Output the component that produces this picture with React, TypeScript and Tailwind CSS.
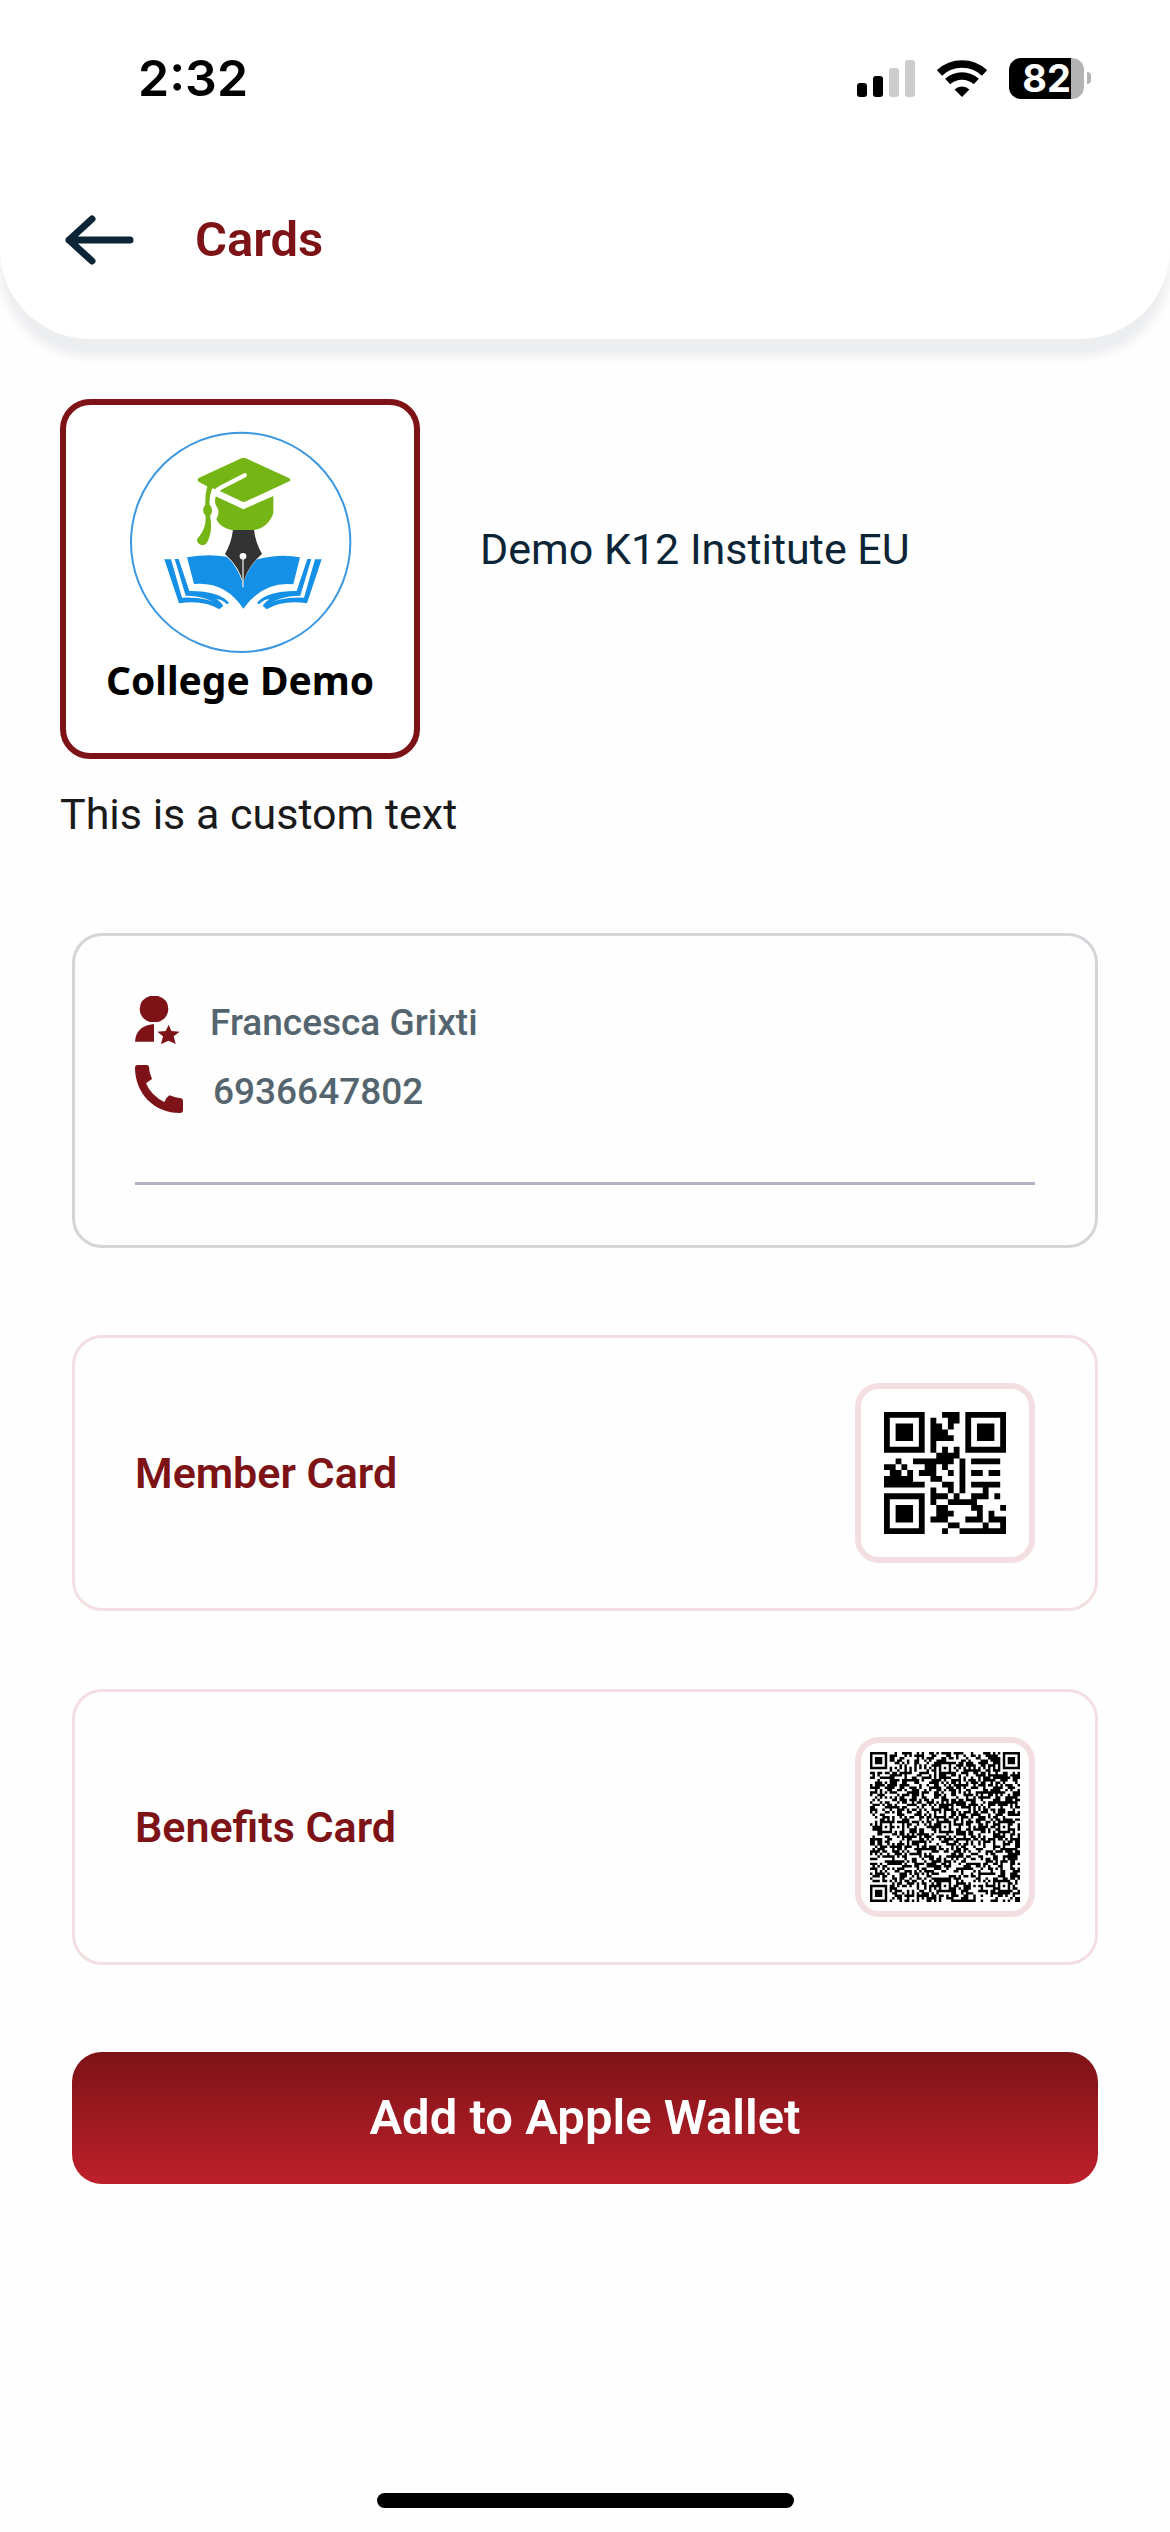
import type { ReactNode } from 'react';

const MEMBER_QR = [
  '#######...###.#######',
  '#.....#.#..##.#.....#',
  '#.###.#.##.#..#.###.#',
  '#.###.#.###...#.###.#',
  '#.###.#.####..#.###.#',
  '#.....#.#.....#.....#',
  '#######.#.#.#.#######',
  '.........####........',
  '..#..#######.#.#####.',
  '##.#...##.#..#.......',
  '.##.#.###..#.#.##.##.',
  '#####...##...#.......',
  '#######...##.#.#####.',
  '........#..#.#...#...',
  '#######.###.#..###.#.',
  '#.....#.#..#####.....',
  '#.###.#..##....##...#',
  '#.###.#..###....#.#..',
  '#.###.#.###...###.###',
  '#.....#....##....#..#',
  '#######...#..########',
];

// Dense 61x61 code: finder, alignment and timing patterns around filler modules.
function buildBenefitsQr() {
  const size = 61;
  let seed = 7919;
  const rows: boolean[][] = [];
  for (let y = 0; y < size; y++) {
    const row: boolean[] = [];
    for (let x = 0; x < size; x++) {
      seed = (seed * 1103515245 + 12345) % 2147483648;
      row.push(seed / 2147483648 < 0.52);
    }
    rows.push(row);
  }

  for (let i = 8; i < size - 8; i++) {
    rows[6][i] = i % 2 === 0;
    rows[i][6] = i % 2 === 0;
  }

  const ring = (cx: number, cy: number, outer: number, light: number[]) => {
    for (let dy = -outer; dy <= outer; dy++) {
      for (let dx = -outer; dx <= outer; dx++) {
        const x = cx + dx;
        const y = cy + dy;
        if (x < 0 || y < 0 || x >= size || y >= size) continue;
        rows[y][x] = !light.includes(Math.max(Math.abs(dx), Math.abs(dy)));
      }
    }
  };

  [[3, 3], [57, 3], [3, 57]].forEach(([x, y]) => ring(x, y, 4, [2, 4]));
  [[30, 6], [6, 30], [30, 30], [54, 30], [30, 54], [54, 54]].forEach(([x, y]) =>
    ring(x, y, 2, [1])
  );

  return rows.map((r) => r.map((on) => (on ? '#' : '.')).join(''));
}

const BENEFITS_QR = buildBenefitsQr();

function QrCode({ rows, className }: { rows: string[]; className: string }) {
  const d = rows
    .map((row, y) =>
      [...row.matchAll(/#+/g)]
        .map((m) => `M${m.index} ${y}h${m[0].length}v1h-${m[0].length}z`)
        .join('')
    )
    .join('');
  return (
    <svg viewBox={`0 0 ${rows.length} ${rows.length}`} className={className} aria-hidden="true">
      <path d={d} fill="#000" />
    </svg>
  );
}

function StatusBar() {
  return (
    <div className="flex h-[156px] items-center justify-between pl-[138px] pr-[79px] font-['Inter',sans-serif]">
      <span className="text-[50px] leading-[60px] font-semibold text-black">2:32</span>
      <div className="flex items-center">
        <svg viewBox="0 0 58 37" className="h-[37px] w-[58px]" aria-hidden="true">
          <rect x="0" y="23" width="10" height="14" rx="3" />
          <rect x="16" y="16" width="10" height="21" rx="3" />
          <rect x="32" y="8" width="10" height="29" rx="3" fill="#ccc" />
          <rect x="48" y="0" width="10" height="37" rx="3" fill="#ccc" />
        </svg>
        <svg viewBox="0 0 50 37" className="ml-[22px] h-[37px] w-[50px]" aria-hidden="true">
          <path d="M2.5 12.9A33 33 0 0 1 47.5 12.9" fill="none" stroke="#000" strokeWidth="7.5" />
          <path d="M10.7 21.6A21 21 0 0 1 39.3 21.6" fill="none" stroke="#000" strokeWidth="7.5" />
          <path d="M25 37L17.6 29.4A11 11 0 0 1 32.4 29.4Z" />
        </svg>
        <div className="ml-[22px] flex h-[41px] w-[75px] items-center justify-center rounded-[12px] bg-[linear-gradient(90deg,#000_83%,#b3b3b3_83%)] text-[38px] leading-[41px] font-bold text-white">
          82
        </div>
        <div className="ml-[3px] h-[12px] w-[4px] rounded-r-full bg-[#b3b3b3]" />
      </div>
    </div>
  );
}

function CollegeLogo() {
  return (
    <svg viewBox="48 45 1044 756" className="h-[252px] w-[348px]" aria-hidden="true">
      <circle cx="572" cy="457" r="329" fill="#fff" stroke="#3b97e0" strokeWidth="6" />
      {/* book */}
      <path
        d="M411 502Q475 490 530 500Q560 525 579 580Q598 528 622 508Q690 490 750 502L730 583Q640 573 580 656Q525 573 432 582Z"
        fill="#1490e6"
      />
      {[undefined, 'translate(1158 0) scale(-1 1)'].map((t, i) => (
        <g key={i} transform={t} fill="#1490e6">
          <path d="M343 508H363L396 623Q475 620 518 649L508 658Q460 629 387 640Z" />
          <path d="M374 507H386L418 603Q505 602 537 638L531 643Q514 627 500 628Q513 636 520 647L514 652Q475 618 407 617Z" />
        </g>
      ))}
      {/* pen nib */}
      <path
        d="M549 418H612Q616 458 636 492Q592 530 580 580Q568 530 525 492Q545 458 549 418Z"
        fill="#333"
      />
      <circle cx="579" cy="499" r="10" fill="#fff" />
      <path d="M579 505V592" stroke="#e5e5e5" strokeWidth="4" />
      {/* cap */}
      <g fill="#76b516">
        <path d="M446 264L574 205Q581 201 588 205L718 265Q725 270 718 274L588 334Q581 338 574 334L511 304L492 296L474 290L446 275Q440 269 446 264Z" />
        <path d="M497 319L580 358L670 318V370C662 395 640 418 612 420H545C520 414 505 402 499 386C507 375 507 362 502 353C494 343 494 334 497 319Z" />
        <path d="M470 288H490Q477 315 479 344Q493 360 480 378C487 410 482 438 472 456Q466 467 454 465Q441 462 441 448C455 430 468 415 467 378Q452 360 466 344Q465 312 472 288Z" />
      </g>
      <path
        d="M584 256L512 293Q488 304 486 336"
        fill="none"
        stroke="#fff"
        strokeWidth="13"
        strokeLinecap="round"
      />
    </svg>
  );
}

function PersonStarIcon() {
  return (
    <svg viewBox="225 231 135 144" className="h-[48px] w-[45px]" fill="#7d1316" aria-hidden="true">
      <path d="M270 231H294Q325 240 325 270Q323 300 294 309H270Q241 300 239 270Q240 240 270 231Z" />
      <path d="M282 315V368H225Q228 320 282 315Z" />
      <path d="M326 317L334 336L359 338L341 352L347 375L326 365L303 375L309 352L292 338L317 336Z" />
    </svg>
  );
}

function PhoneIcon() {
  return (
    <svg viewBox="225 438 144 144" className="h-[48px] w-[48px]" fill="#7d1316" aria-hidden="true">
      <path d="M225 446Q225 438 233 438H260Q266 438 267 444L269 459L276 480L258 493Q274 531 313 549Q316 538 328 529L346 535L363 538Q369 539 369 545V573Q369 582 360 582C282 582 225 522 225 446Z" />
    </svg>
  );
}

function QrCard({ title, children }: { title: string; children: ReactNode }) {
  return (
    <button
      type="button"
      className="flex w-full items-center justify-between rounded-[30px] border-3 border-[#f3dfe1] px-15 py-[45px] text-left"
    >
      <span className="text-[43px] leading-[50px] font-semibold text-[#7d1316]">{title}</span>
      <span className="flex size-[180px] items-center justify-center rounded-[24px] border-6 border-[#f3dfe1] bg-white">
        {children}
      </span>
    </button>
  );
}

export default function App() {
  return (
    <div className="flex min-h-screen flex-col bg-[#fefefe] font-['Roboto',sans-serif]">
      <header className="rounded-b-[90px] bg-white pb-[15px] shadow-[0_18px_9px_#edeef0]">
        <StatusBar />
        <div className="flex h-[168px] items-center gap-15 px-15">
          <button type="button" aria-label="Back">
            <svg viewBox="0 0 75 50" className="h-[50px] w-[75px]" aria-hidden="true">
              <path
                d="M32 4L9 25L32 46M9 25H70"
                fill="none"
                stroke="#0c2536"
                strokeWidth="7"
                strokeLinecap="round"
                strokeLinejoin="round"
              />
            </svg>
          </button>
          <h1 className="text-[49px] leading-[58px] font-semibold text-[#7d1316]">Cards</h1>
        </div>
      </header>

      <main className="px-15 pt-15">
        <div className="flex items-center gap-15">
          <div className="flex size-[360px] shrink-0 flex-col items-center rounded-[30px] border-6 border-[#7d1316] bg-white">
            <CollegeLogo />
            <span className="font-['Noto_Sans',sans-serif] text-[39px] leading-[46px] font-bold text-black">
              College Demo
            </span>
          </div>
          <h2 className="pb-15 text-[43px] leading-[50px] text-[#0c2536]">Demo K12 Institute EU</h2>
        </div>
        <p className="mt-[30px] text-[43px] leading-[50px] text-[#1a1a1a]">This is a custom text</p>

        <div className="mt-[94px] px-3">
          <section className="rounded-[30px] border-3 border-[#d3d5d9] px-15 py-15 text-[37px] leading-[42px] font-medium text-[#54656f]">
            <div className="flex items-end gap-[30px]">
              <PersonStarIcon />
              <span>Francesca Grixti</span>
            </div>
            <div className="mt-[21px] flex items-end gap-[30px]">
              <PhoneIcon />
              <span>6936647802</span>
            </div>
            <hr className="mt-[69px] border-t-3 border-[#b2b2c4]" />
          </section>

          <div className="mt-[87px] flex flex-col gap-[78px]">
            <QrCard title="Member Card">
              <QrCode rows={MEMBER_QR} className="size-[122px]" />
            </QrCard>
            <QrCard title="Benefits Card">
              <QrCode rows={BENEFITS_QR} className="size-[150px]" />
            </QrCard>
          </div>

          <button
            type="button"
            className="mt-[87px] h-[132px] w-full rounded-[30px] bg-linear-to-b from-[#7d1316] to-[#be202c] text-[49px] leading-[58px] font-semibold text-white"
          >
            Add to Apple Wallet
          </button>
        </div>
      </main>

      <div className="mx-auto mt-auto mb-6 h-[15px] w-[417px] rounded-full bg-black" />
    </div>
  );
}
